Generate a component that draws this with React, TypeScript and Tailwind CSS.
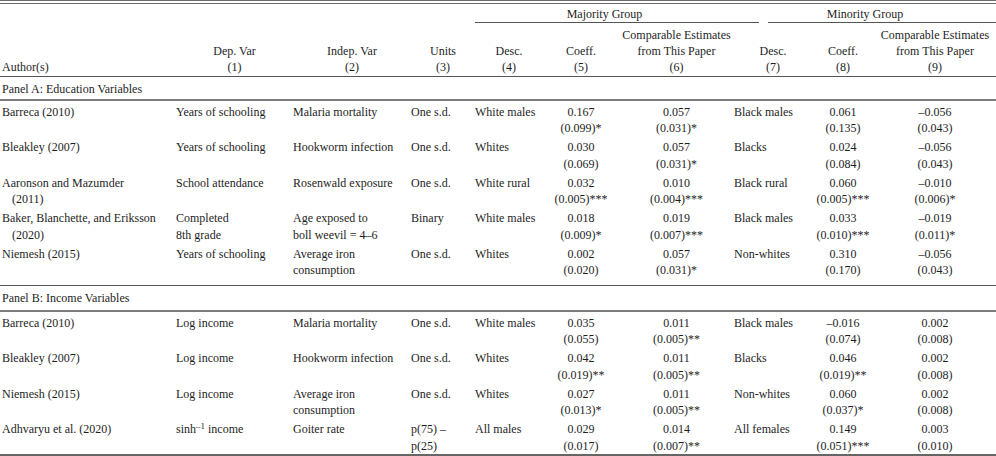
import type { ReactNode } from "react";

type Row = {
  author: string[];
  dep: ReactNode[];
  indep: string[];
  units: string[];
  d1: string;
  c1: string[];
  e1: string[];
  d2: string;
  c2: string[];
  e2: string[];
};

const COLS = "grid grid-cols-[176px_117px_118px_64px_68px_76px_115px_78px_62px_122px]";

const panelA: Row[] = [
  {
    author: ["Barreca (2010)"],
    dep: ["Years of schooling"],
    indep: ["Malaria mortality"],
    units: ["One s.d."],
    d1: "White males",
    c1: ["0.167", "(0.099)*"],
    e1: ["0.057", "(0.031)*"],
    d2: "Black males",
    c2: ["0.061", "(0.135)"],
    e2: ["–0.056", "(0.043)"],
  },
  {
    author: ["Bleakley (2007)"],
    dep: ["Years of schooling"],
    indep: ["Hookworm infection"],
    units: ["One s.d."],
    d1: "Whites",
    c1: ["0.030", "(0.069)"],
    e1: ["0.057", "(0.031)*"],
    d2: "Blacks",
    c2: ["0.024", "(0.084)"],
    e2: ["–0.056", "(0.043)"],
  },
  {
    author: ["Aaronson and Mazumder", "(2011)"],
    dep: ["School attendance"],
    indep: ["Rosenwald exposure"],
    units: ["One s.d."],
    d1: "White rural",
    c1: ["0.032", "(0.005)***"],
    e1: ["0.010", "(0.004)***"],
    d2: "Black rural",
    c2: ["0.060", "(0.005)***"],
    e2: ["–0.010", "(0.006)*"],
  },
  {
    author: ["Baker, Blanchette, and Eriksson", "(2020)"],
    dep: ["Completed", "8th grade"],
    indep: ["Age exposed to", "boll weevil = 4–6"],
    units: ["Binary"],
    d1: "White males",
    c1: ["0.018", "(0.009)*"],
    e1: ["0.019", "(0.007)***"],
    d2: "Black males",
    c2: ["0.033", "(0.010)***"],
    e2: ["–0.019", "(0.011)*"],
  },
  {
    author: ["Niemesh (2015)"],
    dep: ["Years of schooling"],
    indep: ["Average iron", "consumption"],
    units: ["One s.d."],
    d1: "Whites",
    c1: ["0.002", "(0.020)"],
    e1: ["0.057", "(0.031)*"],
    d2: "Non-whites",
    c2: ["0.310", "(0.170)"],
    e2: ["–0.056", "(0.043)"],
  },
];

const panelB: Row[] = [
  {
    author: ["Barreca (2010)"],
    dep: ["Log income"],
    indep: ["Malaria mortality"],
    units: ["One s.d."],
    d1: "White males",
    c1: ["0.035", "(0.055)"],
    e1: ["0.011", "(0.005)**"],
    d2: "Black males",
    c2: ["–0.016", "(0.074)"],
    e2: ["0.002", "(0.008)"],
  },
  {
    author: ["Bleakley (2007)"],
    dep: ["Log income"],
    indep: ["Hookworm infection"],
    units: ["One s.d."],
    d1: "Whites",
    c1: ["0.042", "(0.019)**"],
    e1: ["0.011", "(0.005)**"],
    d2: "Blacks",
    c2: ["0.046", "(0.019)**"],
    e2: ["0.002", "(0.008)"],
  },
  {
    author: ["Niemesh (2015)"],
    dep: ["Log income"],
    indep: ["Average iron", "consumption"],
    units: ["One s.d."],
    d1: "Whites",
    c1: ["0.027", "(0.013)*"],
    e1: ["0.011", "(0.005)**"],
    d2: "Non-whites",
    c2: ["0.060", "(0.037)*"],
    e2: ["0.002", "(0.008)"],
  },
  {
    author: ["Adhvaryu et al. (2020)"],
    dep: [
      <>
        sinh<sup>–1</sup> income
      </>,
    ],
    indep: ["Goiter rate"],
    units: ["p(75) –", "p(25)"],
    d1: "All males",
    c1: ["0.029", "(0.017)"],
    e1: ["0.014", "(0.007)**"],
    d2: "All females",
    c2: ["0.149", "(0.051)***"],
    e2: ["0.003", "(0.010)"],
  },
];

function Lines({ lines, className = "" }: { lines: ReactNode[]; className?: string }) {
  return (
    <div className={className}>
      {lines.map((l, i) => (
        <div key={i} className="whitespace-nowrap">
          {l}
        </div>
      ))}
    </div>
  );
}

function BodyRow({ r }: { r: Row }) {
  return (
    <div className={`${COLS} h-[35.5px] pt-[2.5px] leading-[16.5px]`}>
      <div className="pl-[2px]">
        {r.author.map((a, i) => (
          <div key={i} className={`whitespace-nowrap ${i > 0 ? "pl-[10px]" : ""}`}>
            {a}
          </div>
        ))}
      </div>
      <Lines lines={r.dep} />
      <Lines lines={r.indep} />
      <Lines lines={r.units} />
      <Lines lines={[r.d1]} />
      <Lines lines={r.c1} className="text-center" />
      <Lines lines={r.e1} className="text-center" />
      <Lines lines={[r.d2]} />
      <Lines lines={r.c2} className="text-center" />
      <Lines lines={r.e2} className="text-center" />
    </div>
  );
}

function Head({ lines }: { lines: string[] }) {
  return <Lines lines={lines} className="text-center" />;
}

export default function App() {
  return (
    <div className="h-[456px] w-[996px] overflow-hidden bg-white font-['Liberation_Serif','Times_New_Roman',serif] text-[12px] text-[#1e1e1e]">
      <div className="h-px bg-[#6a6a6a]" />
      <div className="mt-[2px] h-px bg-[#6a6a6a]" />

      {/* group headings */}
      <div className={`${COLS} h-[18px] pt-[2px] leading-[16px]`}>
        <div className="col-span-3 col-start-5 text-center">Majority Group</div>
        <div className="col-span-3 text-center">Minority Group</div>
      </div>
      <div className="flex h-px">
        <div className="w-[475px]" />
        <div className="w-[284px] bg-[#555]" />
        <div className="ml-[9px] flex-1 bg-[#555]" />
      </div>

      {/* column headings */}
      <div className={`${COLS} h-[53px] items-end pb-[1px] leading-[16px]`}>
        <div className="pl-[2px]">Author(s)</div>
        <Head lines={["Dep. Var", "(1)"]} />
        <Head lines={["Indep. Var", "(2)"]} />
        <Head lines={["Units", "(3)"]} />
        <Head lines={["Desc.", "(4)"]} />
        <Head lines={["Coeff.", "(5)"]} />
        <Head lines={["Comparable Estimates", "from This Paper", "(6)"]} />
        <Head lines={["Desc.", "(7)"]} />
        <Head lines={["Coeff.", "(8)"]} />
        <Head lines={["Comparable Estimates", "from This Paper", "(9)"]} />
      </div>
      <div className="h-px bg-[#555]" />

      {/* panel A */}
      <div className="h-[22px] pl-[2px] pt-[4px] leading-[16px]">Panel A: Education Variables</div>
      <div className="h-[2px] bg-[#7d7d7d]" />
      {panelA.map((r, i) => (
        <BodyRow key={i} r={r} />
      ))}
      <div className="h-[6.5px]" />
      <div className="h-px bg-[#555]" />

      {/* panel B */}
      <div className="h-[24px] pl-[2px] pt-[4px] leading-[16px]">Panel B: Income Variables</div>
      <div className="h-[2px] bg-[#7d7d7d]" />
      {panelB.map((r, i) => (
        <BodyRow key={i} r={r} />
      ))}
      <div className="h-[2px] bg-[#666]" />
    </div>
  );
}
